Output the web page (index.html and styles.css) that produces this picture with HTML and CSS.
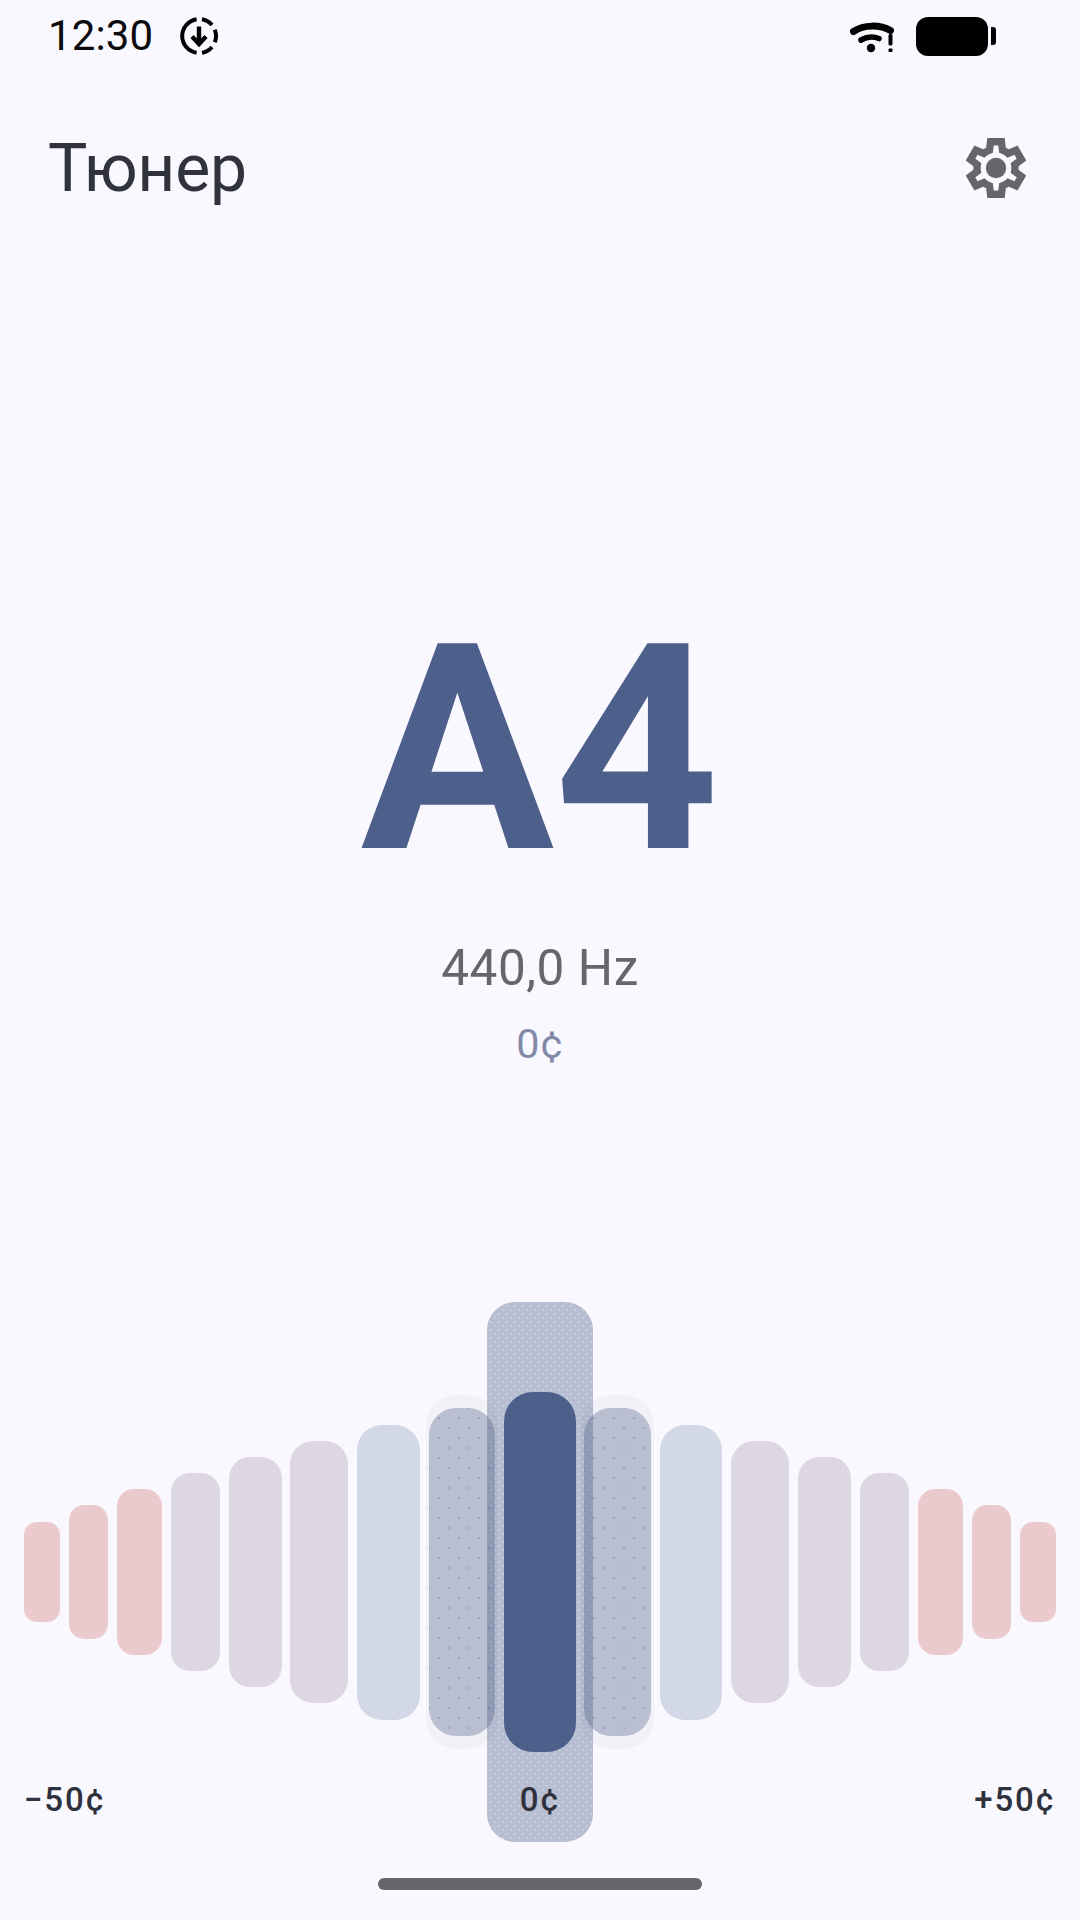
FILE: index.html
```html
<!DOCTYPE html>
<html lang="ru">
<head>
<meta charset="utf-8">
<title>Тюнер</title>
<link rel="stylesheet" href="styles.css">
</head>
<body>
<div class="screen">
  <header class="status">
    <div class="status-left">
      <span class="time">12:30</span>
      <svg class="dl-icon" viewBox="0 0 40 40" aria-hidden="true">
        <path d="M17.6 3.2A17 17 0 0 0 17.6 36.8M22.95 3.26A17 17 0 0 1 33 9.07M35.76 13.63A17 17 0 0 1 35.76 26.37M33 30.93A17 17 0 0 1 22.95 36.74" fill="none" stroke="#000" stroke-width="4"/>
        <path d="M20 10.5v17M13 20.5l7 7.5 7-7.5" fill="none" stroke="#000" stroke-width="4.4"/>
      </svg>
    </div>
    <div class="status-right">
      <svg class="wifi-icon" viewBox="0 0 46 34" aria-hidden="true">
        <path d="M4.5 12.5C15 5.5 31 5.5 41.5 11.5" fill="none" stroke="#000" stroke-width="7" stroke-linecap="round"/>
        <path d="M12 21C18 17.5 25 17.5 30 19.5" fill="none" stroke="#000" stroke-width="5.6" stroke-linecap="round"/>
        <circle cx="22" cy="29" r="4.2"/>
        <rect x="39.5" y="15" width="4" height="11.5" rx="1.5"/>
        <rect x="39.5" y="29.5" width="4" height="3.5" rx="1"/>
      </svg>
      <div class="battery"><span class="battery-body"></span><span class="battery-tip"></span></div>
    </div>
  </header>

  <div class="appbar">
    <h1 class="title">Тюнер</h1>
    <svg class="gear" viewBox="0 -960 960 960" aria-hidden="true">
      <path class="gear-ring" d="m370-80-16-128q-13-5-24.5-12T307-235l-119 50L78-375l103-78q-1-7-1-13.5v-27q0-6.5 1-13.5L78-585l110-190 119 50q11-8 23-15t24-12l16-128h220l16 128q13 5 24.5 12t22.5 15l119-50 110 190-103 78q1 7 1 13.5v27q0 6.5-2 13.5l103 78-110 190-118-50q-11 8-23 15t-24 12L590-80H370Zm70-80h79l14-106q31-8 57.5-23.5T639-327l99 41 39-68-86-65q5-14 7-29.5t2-31.5q0-16-2-31.5t-7-29.5l86-65-39-68-99 42q-22-23-48.5-38.5T533-694l-13-106h-79l-14 106q-31 8-57.5 23.5T321-633l-99-41-39 68 86 64q-5 15-7 30t-2 32q0 16 2 31t7 30l-86 65 39 68 99-42q22 23 48.5 38.5T427-266l13 106Z"/>
      <circle cx="480" cy="-480" r="140"/>
    </svg>
  </div>

  <main class="reading">
    <div class="note">A4</div>
    <div class="freq">440,0 Hz</div>
    <div class="cents">0¢</div>
  </main>

  <section class="meter">
    <div class="meter-highlight"></div>
    <div class="bars">
      <div class="bar l0 red"></div>
      <div class="bar l1 red"></div>
      <div class="bar l2 red"></div>
      <div class="bar l3 grey"></div>
      <div class="bar l4 grey"></div>
      <div class="bar l5 grey"></div>
      <div class="bar l6 blue"></div>
      <div class="bar l7 near"></div>
      <div class="bar l8 center"></div>
      <div class="bar l7 near"></div>
      <div class="bar l6 blue"></div>
      <div class="bar l5 grey"></div>
      <div class="bar l4 grey"></div>
      <div class="bar l3 grey"></div>
      <div class="bar l2 red"></div>
      <div class="bar l1 red"></div>
      <div class="bar l0 red"></div>
    </div>
    <div class="scale">
      <span class="tick">−50¢</span>
      <span class="tick">0¢</span>
      <span class="tick">+50¢</span>
    </div>
  </section>

  <div class="home-wrap"><div class="home-bar"></div></div>
</div>
</body>
</html>
```

FILE: styles.css
```css
* { box-sizing: border-box; }

html, body {
  margin: 0;
  padding: 0;
  background: #faf8ff;
}

.screen {
  width: 1080px;
  height: 1920px;
  display: flex;
  flex-direction: column;
  overflow: hidden;
  font-family: Roboto, "Noto Sans", sans-serif;
  background: #faf8ff;
}

.status {
  height: 72px;
  padding: 16px 84px 0 48px;
  display: flex;
  justify-content: space-between;
  align-items: flex-start;
}

.status-left,
.status-right {
  display: flex;
  align-items: center;
}

.status-left { height: 40px; gap: 26px; }
.status-right { height: 40px; gap: 21px; }

.time {
  font-size: 42px;
  line-height: 40px;
  letter-spacing: 0.1px;
  color: #0b0b0d;
}

.dl-icon {
  width: 40px;
  height: 40px;
  display: block;
}

.wifi-icon {
  width: 46px;
  height: 34px;
  display: block;
}

.battery {
  display: flex;
  align-items: center;
  gap: 3px;
}

.battery-body {
  width: 72px;
  height: 39px;
  background: #000;
  border-radius: 12px;
}

.battery-tip {
  width: 5px;
  height: 18px;
  background: #000;
  border-radius: 0 3px 3px 0;
}

.appbar {
  height: 132px;
  margin-top: 30px;
  padding: 0 49px 0 48px;
  display: flex;
  justify-content: space-between;
  align-items: center;
}

.title {
  margin: 2px 0 0;
  font-size: 66px;
  line-height: 88px;
  font-weight: 400;
  letter-spacing: -0.2px;
  color: #30323e;
}

.gear {
  width: 70px;
  height: 70px;
  display: block;
  fill: #666569;
}

.gear-ring {
  stroke: #666569;
  stroke-width: 20;
}

.reading {
  margin-top: 347px;
  display: flex;
  flex-direction: column;
  align-items: center;
}

.note {
  font-size: 288px;
  line-height: 338px;
  font-weight: 730;
  color: #4d5f8b;
}

.freq {
  margin-top: 17px;
  font-size: 49.5px;
  line-height: 64px;
  letter-spacing: 0.55px;
  color: #666569;
}

.cents {
  margin-top: 17px;
  font-size: 41.25px;
  line-height: 54px;
  letter-spacing: 0.8px;
  color: #828aa8;
}

.meter {
  position: relative;
  margin-top: auto;
  height: 540px;
  flex: none;
}

.meter-highlight {
  position: absolute;
  left: 487px;
  top: 0;
  width: 106px;
  height: 540px;
  border-radius: 28px;
  background-color: rgba(77, 95, 139, 0.385);
  background-image:
    radial-gradient(circle at center, rgba(250, 248, 255, 0.22) 0.8px, transparent 1px),
    radial-gradient(circle at center, rgba(250, 248, 255, 0.22) 0.8px, transparent 1px);
  background-size: 8px 8px;
  background-position: 0 0, 4px 4px;
}

.bars {
  position: relative;
  margin-top: 90px;
  height: 360px;
  padding: 0 24px;
  display: flex;
  gap: 8.9px;
  align-items: center;
}

.bar { flex: none; position: relative; }

.l0 { width: 35.7px; height: 100px; border-radius: 13px; }
.l1 { width: 39.7px; height: 133.5px; border-radius: 15px; }
.l2 { width: 44.6px; height: 166px; border-radius: 17px; }
.l3 { width: 49px; height: 198px; border-radius: 19px; }
.l4 { width: 53px; height: 230px; border-radius: 21px; }
.l5 { width: 58px; height: 262.5px; border-radius: 23px; }
.l6 { width: 62.3px; height: 295px; border-radius: 25px; }
.l7 { width: 66.8px; height: 328px; border-radius: 27px; }
.l8 { width: 71.4px; height: 360px; border-radius: 29px; }

.red { background: #ebcace; }
.grey { background: #dcd7e3; }
.blue { background: #d3d8e6; }
.center { background: #4d5f8b; }

.near {
  background-color: rgba(77, 95, 139, 0.34);
  background-image:
    radial-gradient(circle at center, rgba(77, 95, 139, 0.28) 0.7px, transparent 1px),
    radial-gradient(circle at center, rgba(77, 95, 139, 0.28) 0.7px, transparent 1px);
  background-size: 20px 20px;
  background-position: 0 0, 10px 10px;
}

.near::before {
  content: "";
  position: absolute;
  inset: -13px -3px;
  border-radius: 30px;
  background: rgba(73, 69, 79, 0.04);
}

.scale {
  position: relative;
  margin-top: 26px;
  padding: 0 24px;
  display: flex;
  justify-content: space-between;
}

.tick {
  font-size: 33px;
  line-height: 44px;
  font-weight: 480;
  letter-spacing: 1.8px;
  color: #2f313c;
}

.home-wrap {
  flex: none;
  height: 78px;
  padding-top: 36px;
  display: flex;
  justify-content: center;
}

.home-bar {
  width: 324px;
  height: 12px;
  border-radius: 6px;
  background: #666569;
}
```
